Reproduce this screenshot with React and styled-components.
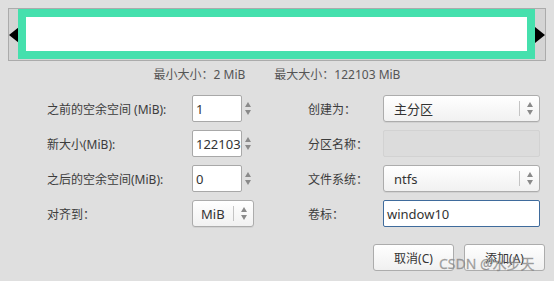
import React from 'react'
import styled, { createGlobalStyle } from 'styled-components'

const Global = createGlobalStyle`
  html, body { margin: 0; padding: 0; background: #dfdfdf; }
  body { font-family: "Noto Sans", "Noto Sans CJK SC", sans-serif; }
`

const Dialog = styled.div`
  position: relative;
  width: 554px;
  height: 281px;
  background: #dfdfdf;
  box-sizing: border-box;
  padding-top: 8px;
  overflow: hidden;
`

const Frame = styled.div`
  margin: 0 8px;
  height: 53px;
  box-sizing: border-box;
  border: 1px solid #ababab;
  background: #d4d4d4;
  display: flex;
  align-items: stretch;
`

const Handle = styled.div`
  width: ${(p) => p.w}px;
  display: flex;
  align-items: center;
  justify-content: ${(p) => (p.side === 'left' ? 'flex-start' : 'flex-end')};
`

const Arrow = styled.div`
  width: 0;
  height: 0;
  border-top: 8px solid transparent;
  border-bottom: 8px solid transparent;
  ${(p) => (p.side === 'left' ? 'border-right: 10px solid #000;' : 'border-left: 10px solid #000;')}
`

const Partition = styled.div`
  flex: 1;
  background: #45e0ad;
  padding: 8px 8px 8px 8px;
  margin-bottom: 1px;
  display: flex;
`

const Inner = styled.div`
  flex: 1;
  background: #fff;
`

const SizeInfo = styled.div`
  display: flex;
  justify-content: center;
  gap: 29px;
  margin-top: 6px;
  height: 16px;
  font-size: 12px;
  line-height: 16px;
  color: #555;
  padding-left: 0;
`

const Form = styled.div`
  display: grid;
  grid-template-columns: 145px 62px 54px 75px 157px;
  grid-auto-rows: 27px;
  row-gap: 8px;
  padding-left: 47px;
  margin-top: 12px;
`

const Label = styled.div`
  display: flex;
  align-items: center;
  font-size: 12px;
  color: #3c3c3c;
  grid-column: ${(p) => p.col};
`

const Spin = styled.div`
  display: flex;
  grid-column: ${(p) => p.col};
`

const Entry = styled.div`
  flex: 1;
  box-sizing: border-box;
  background: ${(p) => (p.disabled ? '#dcdcdc' : '#fff')};
  border: 1px solid ${(p) => (p.focus ? '#3f6b9c' : p.disabled ? '#d2d2d2' : '#a8a8a8')};
  border-radius: 2px;
  display: flex;
  align-items: center;
  padding-left: 3px;
  font-size: 13px;
  color: #333;
  grid-column: ${(p) => p.col || 'auto'};
`

const SpinArrows = styled.div`
  width: 12px;
  display: flex;
  flex-direction: column;
  align-items: center;
  justify-content: center;
  gap: 3px;
`

const Tri = styled.div`
  width: 0;
  height: 0;
  border-left: 3px solid transparent;
  border-right: 3px solid transparent;
  ${(p) => (p.up ? 'border-bottom: 5px solid #8a8a8a;' : 'border-top: 5px solid #8a8a8a;')}
`

const Combo = styled.div`
  grid-column: ${(p) => p.col};
  box-sizing: border-box;
  border: 1px solid #acacac;
  border-radius: 3px;
  background: linear-gradient(#ffffff, #f1f1f1);
  box-shadow: 0 1px 0 rgba(0, 0, 0, 0.06);
  display: flex;
  align-items: center;
  font-size: 13px;
  color: #333;
`

const ComboText = styled.div`
  flex: 1;
  padding-left: ${(p) => p.pad}px;
`

const Sep = styled.div`
  width: 1px;
  height: 15px;
  background: #c4c4c4;
`

const ComboArrows = styled(SpinArrows)`
  width: 19px;
`

const Buttons = styled.div`
  display: flex;
  justify-content: flex-end;
  gap: 10px;
  margin-top: 17px;
  padding-right: 9px;
`

const Button = styled.div`
  width: 81px;
  height: 27px;
  box-sizing: border-box;
  border: 1px solid #acacac;
  border-radius: 3px;
  background: linear-gradient(#ffffff, #f0f0f0);
  display: flex;
  align-items: center;
  justify-content: center;
  font-size: 12px;
  color: #333;
`

const Watermark = styled.div`
  position: absolute;
  left: 439px;
  top: 255px;
  font-size: 14px;
  line-height: 18px;
  color: rgba(140, 140, 140, 0.75);
  -webkit-text-stroke: 0.3px rgba(90, 90, 90, 0.5);
  white-space: nowrap;
`

const Arrows = ({ as: Wrap = SpinArrows }) => (
  <Wrap>
    <Tri up />
    <Tri />
  </Wrap>
)

export default function App() {
  return (
    <Dialog>
      <Global />
      <Frame>
        <Handle w={9} side="left"><Arrow side="left" /></Handle>
        <Partition><Inner /></Partition>
        <Handle w={10} side="right"><Arrow side="right" /></Handle>
      </Frame>

      <SizeInfo>
        <span>最小大小：2 MiB</span>
        <span>最大大小：122103 MiB</span>
      </SizeInfo>

      <Form>
        <Label col="1">之前的空余空间 (MiB):</Label>
        <Spin col="2"><Entry>1</Entry><Arrows /></Spin>
        <Label col="4">创建为：</Label>
        <Combo col="5"><ComboText pad={10}>主分区</ComboText><Sep /><Arrows as={ComboArrows} /></Combo>

        <Label col="1">新大小(MiB):</Label>
        <Spin col="2"><Entry>122103</Entry><Arrows /></Spin>
        <Label col="4">分区名称：</Label>
        <Entry col="5" disabled />

        <Label col="1">之后的空余空间(MiB):</Label>
        <Spin col="2"><Entry>0</Entry><Arrows /></Spin>
        <Label col="4">文件系统：</Label>
        <Combo col="5"><ComboText pad={10}>ntfs</ComboText><Sep /><Arrows as={ComboArrows} /></Combo>

        <Label col="1">对齐到：</Label>
        <Combo col="2"><ComboText pad={8}>MiB</ComboText><Sep /><Arrows as={ComboArrows} /></Combo>
        <Label col="4">卷标：</Label>
        <Entry col="5" focus>window10</Entry>
      </Form>

      <Buttons>
        <Button>取消(C)</Button>
        <Button>添加(A)</Button>
      </Buttons>

      <Watermark>CSDN @水步天</Watermark>
    </Dialog>
  )
}
